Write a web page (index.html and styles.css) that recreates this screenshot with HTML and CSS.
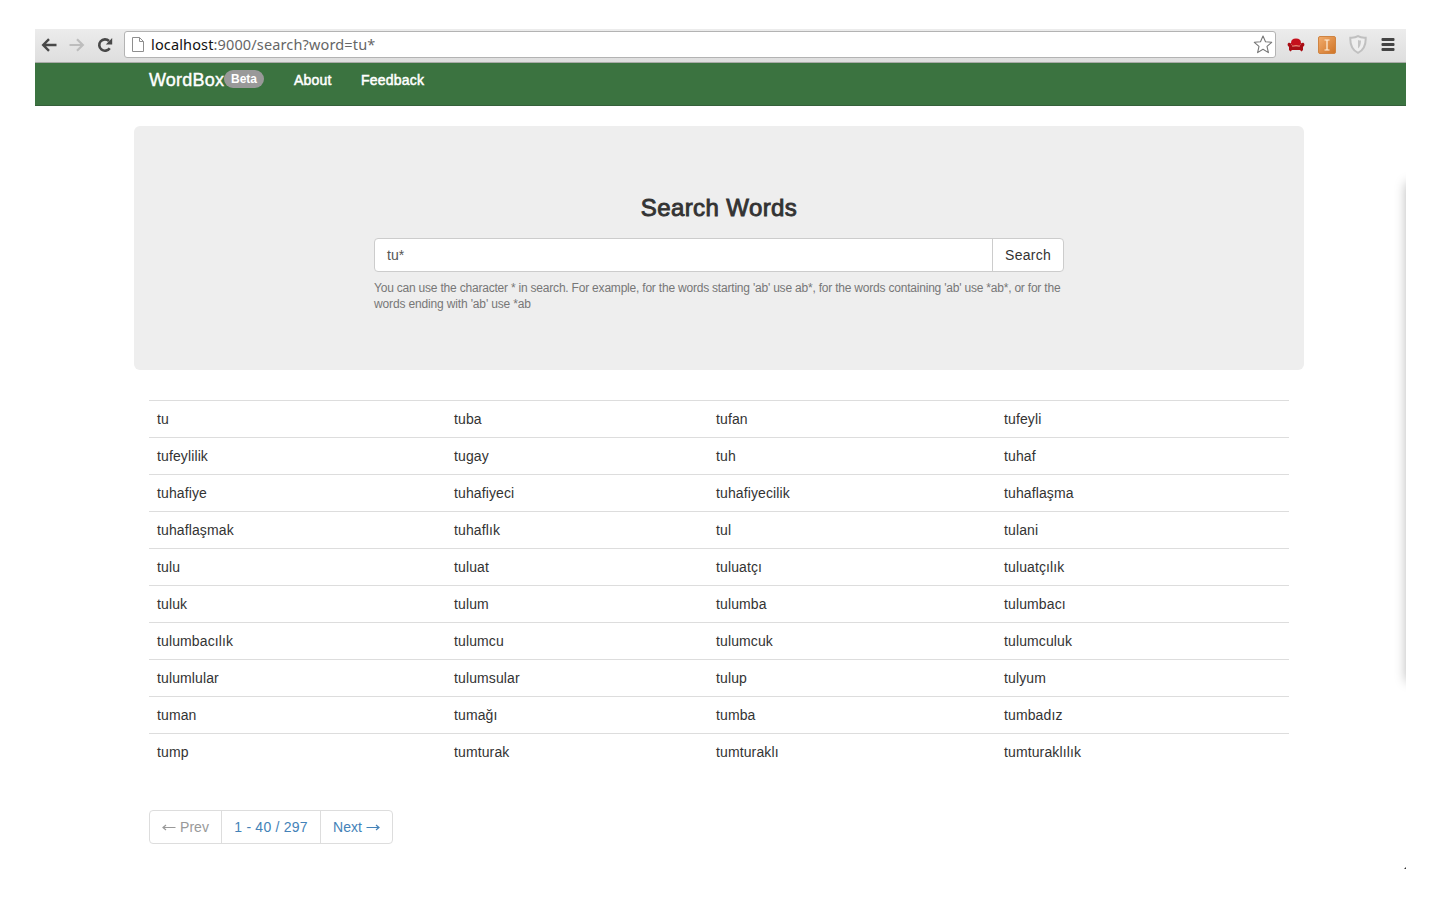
FILE: index.html
```
<!DOCTYPE html>
<html lang="tr">
<head>
<meta charset="utf-8">
<title>WordBox</title>
<link rel="stylesheet" href="styles.css">
</head>
<body>
<div class="window">
  <header class="toolbar">
    <svg class="ico-back" width="16" height="14" viewBox="0 0 16 14" fill="none" stroke="#484848" stroke-width="2.4"><path d="M15.5 7H2.5M8 1.2L2.2 7L8 12.8"/></svg>
    <svg class="ico-forward" width="16" height="14" viewBox="0 0 16 14" fill="none" stroke="#bdbdbd" stroke-width="2.2"><path d="M.5 7H13.5M8 1.2L13.8 7L8 12.8"/></svg>
    <svg class="ico-reload" width="16" height="16" viewBox="0 0 16 16"><path d="M12.7 11.2A5.7 5.7 0 1 1 12 4" fill="none" stroke="#484848" stroke-width="2.6"/><path d="M15.2 1V7.4H8.8Z" fill="#484848"/></svg>
    <div class="address">
      <svg width="12" height="15" viewBox="0 0 12 15" fill="#fff" stroke="#8e8e8e"><path d="M.5.5H7.5L11.5 4.5V14.5H.5ZM7.5.5V4.5H11.5"/></svg>
      <span class="url"><span class="host">localhost</span>:9000/search?word=tu*</span>
      <svg class="star" width="20" height="19" viewBox="0 0 20 19" fill="#fff" stroke="#777" stroke-width="1.1" stroke-linejoin="round"><path d="M10 1L12.5 6.8L18.7 7.3L14 11.4L15.4 17.6L10 14.3L4.6 17.6L6 11.4L1.3 7.3L7.5 6.8Z"/></svg>
    </div>
    <svg class="ico-sofa" width="18" height="14" viewBox="0 0 18 14"><path d="M4 5.2C4 2 5.5.5 9 .5S14 2 14 5.2L12.5 8H5.5Z" fill="#c5101c"/><path d="M.6 6.5C.6 4.2 4 4.2 4.8 7L5.4 8.2H12.6L13.2 7C14 4.2 17.4 4.2 17.4 6.5C17.4 8 16.4 8 16 9V12L14.5 13.5L13 12H5L3.5 13.5L2 12V9C1.6 8 .6 8 .6 6.5Z" fill="#a90d14"/><path d="M5.2 8.2Q9 6.6 12.8 8.2" fill="none" stroke="#f08a70" stroke-width=".9"/></svg>
    <svg class="ico-insta" width="18" height="18" viewBox="0 0 18 18"><defs><linearGradient id="og" x1="0" y1="0" x2="1" y2="1"><stop offset="0" stop-color="#f2ad6e"/><stop offset="1" stop-color="#cf7325"/></linearGradient></defs><rect x=".5" y=".5" width="17" height="17" rx="1.5" fill="url(#og)" stroke="#cf8442"/><path d="M6.5 4H11.5M9 4V14M6.5 14H11.5" stroke="#fff3e2" stroke-width="1.2"/></svg>
    <svg class="ico-shield" width="18" height="19" viewBox="0 0 18 19"><path d="M9 1.2C11.5 2.8 14 3 16.7 2.8C17 10.5 14.5 15.2 9 17.8C3.5 15.2 1 10.5 1.3 2.8C4 3 6.5 2.8 9 1.2Z" fill="#eee" stroke="#c0c0c0" stroke-width="2"/><path d="M9 5C10 5.4 10.8 5.5 12 5.5C11.9 9.5 11 12 9 13.6Z" fill="#c4c4c4"/></svg>
    <svg class="ico-menu" width="14" height="13" viewBox="0 0 14 13" fill="#444"><rect x=".5" width="13" height="3" rx="1"/><rect x=".5" y="5" width="13" height="3" rx="1"/><rect x=".5" y="10" width="13" height="3" rx="1"/></svg>
  </header>
  <nav class="navbar">
    <span class="brand">WordBox</span><span class="badge">Beta</span>
    <a class="nav-about">About</a>
    <a class="nav-feedback">Feedback</a>
  </nav>
  <main class="container">
    <section class="jumbotron">
      <h3>Search Words</h3>
      <div class="search">
        <div class="search-input">tu*</div>
        <div class="search-btn"><span>Search</span></div>
      </div>
      <p class="help"><span class="help-first">You can use the character * in search. For example, for the words starting 'ab' use ab*, for the words containing 'ab' use *ab*, or for the</span><br><span class="help-second">words ending with 'ab' use *ab</span></p>
    </section>
    <section class="results">
      <div class="row"><span>tu</span><span>tuba</span><span>tufan</span><span>tufeyli</span></div>
      <div class="row"><span>tufeylilik</span><span>tugay</span><span>tuh</span><span>tuhaf</span></div>
      <div class="row"><span>tuhafiye</span><span>tuhafiyeci</span><span>tuhafiyecilik</span><span>tuhaflaşma</span></div>
      <div class="row"><span>tuhaflaşmak</span><span>tuhaflık</span><span>tul</span><span>tulani</span></div>
      <div class="row"><span>tulu</span><span>tuluat</span><span>tuluatçı</span><span>tuluatçılık</span></div>
      <div class="row"><span>tuluk</span><span>tulum</span><span>tulumba</span><span>tulumbacı</span></div>
      <div class="row"><span>tulumbacılık</span><span>tulumcu</span><span>tulumcuk</span><span>tulumculuk</span></div>
      <div class="row"><span>tulumlular</span><span>tulumsular</span><span>tulup</span><span>tulyum</span></div>
      <div class="row"><span>tuman</span><span>tumağı</span><span>tumba</span><span>tumbadız</span></div>
      <div class="row"><span>tump</span><span>tumturak</span><span>tumturaklı</span><span>tumturaklılık</span></div>
    </section>
    <div class="pager">
      <span class="page prev"><svg width="14" height="8" viewBox="0 0 14 8" fill="none" stroke="currentColor" stroke-width="1.2"><path d="M13.5 4.5H1M4 2L1 4.5L4 7"/></svg>Prev</span>
      <span class="page count">1 - 40 / 297</span>
      <span class="page next">Next<svg width="14" height="8" viewBox="0 0 14 8" fill="none" stroke="currentColor" stroke-width="1.2"><path d="M.5 4.5H13M10 2L13 4.5L10 7"/></svg></span>
    </div>
  </main>
  <div class="edge-shadow"></div>
  <div class="resize-corner"></div>
</div>
</body>
</html>
```
FILE: styles.css
```
* { box-sizing: border-box; }
body {
  margin: 0;
  padding: 29px 34px 0 35px;
  background: #fff;
  color: #333;
  font: 14px/20px "Liberation Sans", Arial, sans-serif;
}
.window { position: relative; height: 841px; overflow: hidden; }

.toolbar {
  display: flex;
  align-items: center;
  height: 34px;
  padding: 0 11px 2px 6px;
  background: linear-gradient(#ececec, #dedede);
  border-bottom: 1px solid #a9aba8;
}
.toolbar svg { flex: none; }
.ico-forward { margin-left: 12px; }
.ico-reload { margin-left: 12px; }
.address {
  display: flex;
  align-items: center;
  flex: 1;
  height: 27px;
  margin: 0 11px 0 11px;
  padding: 0 2px 0 7px;
  background: #fff;
  border: 1px solid #b3b3b3;
  border-radius: 3px;
}
.url {
  margin: -2px 0 0 7px;
  font: 14.5px/22px "Noto Sans", sans-serif;
  letter-spacing: .14px;
  color: #666;
  white-space: nowrap;
}
.host { color: #111; }
.star { margin-left: auto; }
.ico-insta { margin-left: 13px; }
.ico-shield { margin-left: 13px; }
.ico-menu { margin-left: 14px; }

.navbar {
  display: flex;
  height: 43px;
  padding: 7px 0 0 114px;
  background: #3b7340;
  border-bottom: 1px solid #35603a;
  color: #fff;
}
.brand { font-size: 18px; -webkit-text-stroke: .4px #fff; letter-spacing: .2px; width: 75px; }
.badge {
  width: 40px;
  height: 18px;
  border-radius: 9px;
  background: #999;
  font-size: 12px;
  font-weight: bold;
  line-height: 18px;
  text-align: center;
}
.nav-about, .nav-feedback { -webkit-text-stroke: .5px #fff; letter-spacing: .2px; }
.nav-about { margin-left: 30px; width: 38px; }
.nav-feedback { margin-left: 29px; }

.container { width: 1170px; margin: 20px 0 0 99px; }
.jumbotron {
  height: 244px;
  padding: 68px 240px 0;
  background: #eee;
  border-radius: 6px;
}
h3 {
  margin: 0 0 17px;
  font-size: 24px;
  font-weight: normal;
  line-height: 27px;
  text-align: center;
  letter-spacing: .4px;
  -webkit-text-stroke: .9px #333;
}
.search {
  display: flex;
  height: 34px;
  background: #fff;
  border: 1px solid #ccc;
  border-radius: 4px;
  line-height: 32px;
}
.search-input { flex: 1; padding-left: 12px; color: #555; }
.search-btn { width: 71px; border-left: 1px solid #ccc; text-align: center; letter-spacing: .25px; }
.help {
  margin: 8px 0 0;
  font-size: 12px;
  line-height: 16px;
  color: #777;
  white-space: nowrap;
}
.help-first { letter-spacing: -.207px; }
.help-second { letter-spacing: -.15px; }

.results { margin: 30px 15px 0; letter-spacing: .12px; }
.row {
  display: grid;
  grid-template-columns: 297px 262px 288px 1fr;
  height: 37px;
  padding: 8px 0 0 8px;
  border-top: 1px solid #ddd;
}

.pager {
  display: inline-flex;
  height: 34px;
  margin: 40px 15px 0;
  border: 1px solid #ddd;
  border-radius: 4px;
  line-height: 32px;
  color: #4482b8;
}
.page { display: flex; align-items: center; justify-content: center; gap: 4px; }
.page + .page { border-left: 1px solid #ddd; }
.prev { width: 71px; color: #999; }
.count { width: 99px; letter-spacing: .22px; }
.next { width: 72px; }

.edge-shadow {
  position: absolute;
  top: 154px;
  right: -20px;
  width: 20px;
  height: 498px;
  box-shadow: 0 0 12px 0 rgba(0, 0, 0, .28);
}
.resize-corner {
  position: absolute;
  right: 0;
  bottom: 1px;
  width: 2px;
  height: 2px;
  background: #333;
  clip-path: polygon(100% 0, 100% 100%, 0 100%);
}
```
